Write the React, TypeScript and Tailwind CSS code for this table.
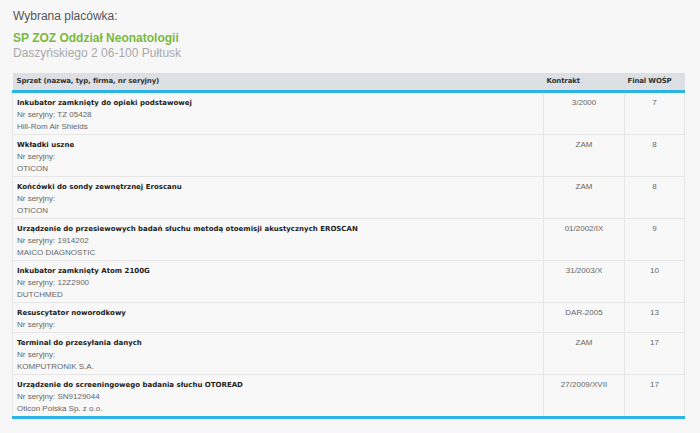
const rows = [
  { name: "Inkubator zamknięty do opieki podstawowej", serial: "TZ 05428", firm: "Hill-Rom Air Shields", contract: "3/2000", final: "7" },
  { name: "Wkładki uszne", serial: "", firm: "OTICON", contract: "ZAM", final: "8" },
  { name: "Końcówki do sondy zewnętrznej Eroscanu", serial: "", firm: "OTICON", contract: "ZAM", final: "8" },
  { name: "Urządzenie do przesiewowych badań słuchu metodą otoemisji akustycznych EROSCAN", serial: "1914202", firm: "MAICO DIAGNOSTIC", contract: "01/2002/IX", final: "9" },
  { name: "Inkubator zamknięty Atom 2100G", serial: "12Z2900", firm: "DUTCHMED", contract: "31/2003/X", final: "10" },
  { name: "Resuscytator noworodkowy", serial: "", firm: "", contract: "DAR-2005", final: "13" },
  { name: "Terminal do przesyłania danych", serial: "", firm: "KOMPUTRONIK S.A.", contract: "ZAM", final: "17" },
  { name: "Urządzenie do screeningowego badania słuchu OTOREAD", serial: "SN9129044", firm: "Oticon Polska Sp. z o.o.", contract: "27/2009/XVII", final: "17" },
];

export default function App() {
  return (
    <div className="min-h-[433px] w-[700px] bg-[#f7f7f8] px-[12px] pt-[8px] font-['Liberation_Sans',Arial,sans-serif]">
      {/* Selected facility */}
      <div className="pl-[1px]">
        <div className="text-[12px] leading-[16px] text-[#555]">Wybrana placówka:</div>
        <div className="mt-[7px] text-[12px] font-bold leading-[15px] text-[#7ab940]">SP ZOZ Oddział Neonatologii</div>
        <div className="text-[12px] leading-[15px] text-[#a9a9a9]">Daszyńskiego 2 06-100 Pułtusk</div>
      </div>

      {/* Equipment table */}
      <table className="mt-[12px] w-[672px] table-fixed border-collapse">
        <colgroup>
          <col className="w-[531px]" />
          <col className="w-[81px]" />
          <col className="w-[60px]" />
        </colgroup>
        <thead>
          <tr className="h-[18px] border-b-[3px] border-[#2cb4e4] bg-[#dcdfe3] text-left font-['DejaVu_Sans',Verdana,sans-serif] text-[7px] tracking-[-0.15px] text-[#333]">
            <th className="px-[4px] font-bold">Sprzet (nazwa, typ, firma, nr seryjny)</th>
            <th className="px-[3px] font-bold">Kontrakt</th>
            <th className="px-[3px] font-bold">Final WOŚP</th>
          </tr>
        </thead>
        <tbody className="border-b-[3px] border-[#2cb4e4] bg-[#f8f8f8]">
          {rows.map((r, i) => (
            <tr key={i} className="border-b border-[#e6e6e6] align-top last:border-b-0">
              <td className="border-l border-[#e6e6e6] px-[4px] pt-[4px] pb-[1px] text-[8px] leading-[12px] text-[#666]">
                <div className="font-['DejaVu_Sans',Verdana,sans-serif] text-[7px] font-bold text-[#222]">{r.name}</div>
                <div>Nr seryjny: {r.serial}</div>
                {r.firm && <div>{r.firm}</div>}
              </td>
              <td className="border-l border-[#e6e6e6] pt-[4px] text-center text-[8px] leading-[12px] text-[#666]">{r.contract}</td>
              <td className="border-x border-[#e6e6e6] pt-[4px] text-center text-[8px] leading-[12px] text-[#666]">{r.final}</td>
            </tr>
          ))}
        </tbody>
      </table>
    </div>
  );
}
